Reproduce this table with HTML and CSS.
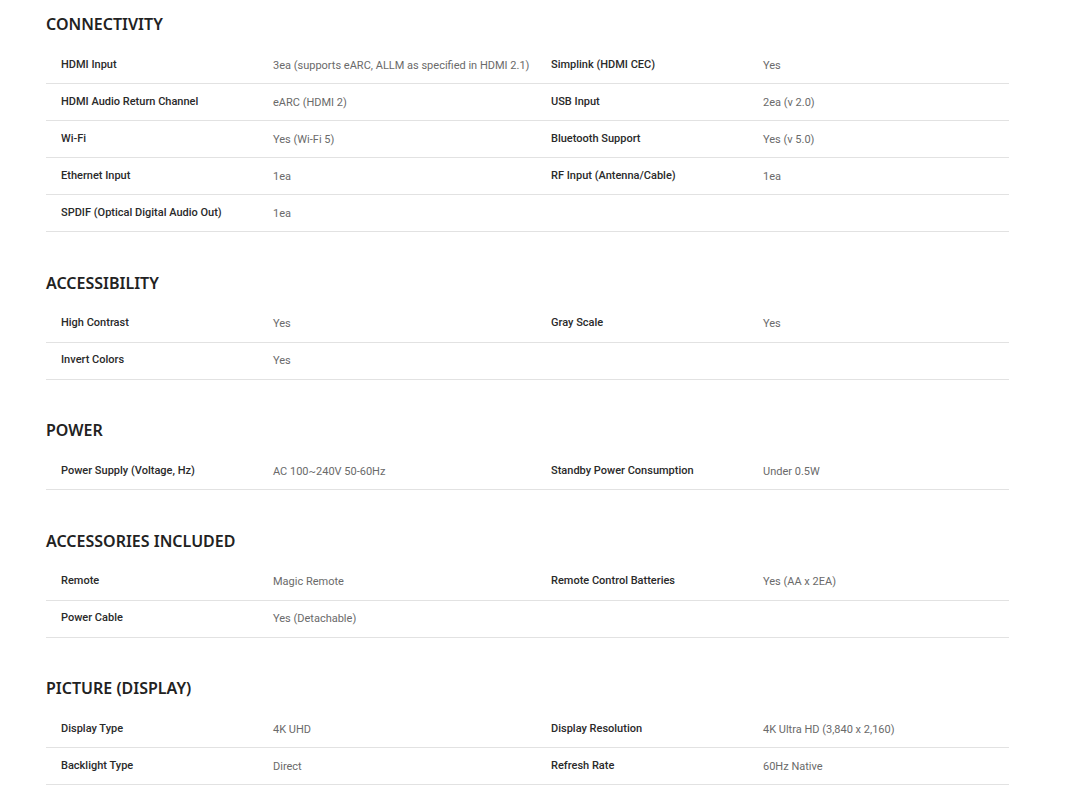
FILE: index.html
```html
<!DOCTYPE html>
<html lang="en">
<head>
<meta charset="utf-8">
<title>Specs</title>
<link rel="stylesheet" href="styles.css">
</head>
<body>
<div class="specs">
  <section class="group">
    <h2 class="title">CONNECTIVITY</h2>
    <div class="row"><span class="lbl">HDMI Input</span><span class="val">3ea (supports eARC, ALLM as specified in HDMI 2.1)</span><span class="lbl">Simplink (HDMI CEC)</span><span class="val">Yes</span></div>
    <div class="row"><span class="lbl">HDMI Audio Return Channel</span><span class="val">eARC (HDMI 2)</span><span class="lbl">USB Input</span><span class="val">2ea (v 2.0)</span></div>
    <div class="row"><span class="lbl">Wi-Fi</span><span class="val">Yes (Wi-Fi 5)</span><span class="lbl">Bluetooth Support</span><span class="val">Yes (v 5.0)</span></div>
    <div class="row"><span class="lbl">Ethernet Input</span><span class="val">1ea</span><span class="lbl">RF Input (Antenna/Cable)</span><span class="val">1ea</span></div>
    <div class="row"><span class="lbl">SPDIF (Optical Digital Audio Out)</span><span class="val">1ea</span></div>
  </section>
  <section class="group">
    <h2 class="title">ACCESSIBILITY</h2>
    <div class="row"><span class="lbl">High Contrast</span><span class="val">Yes</span><span class="lbl">Gray Scale</span><span class="val">Yes</span></div>
    <div class="row"><span class="lbl">Invert Colors</span><span class="val">Yes</span></div>
  </section>
  <section class="group">
    <h2 class="title">POWER</h2>
    <div class="row"><span class="lbl">Power Supply (Voltage, Hz)</span><span class="val">AC 100~240V 50-60Hz</span><span class="lbl">Standby Power Consumption</span><span class="val">Under 0.5W</span></div>
  </section>
  <section class="group">
    <h2 class="title">ACCESSORIES INCLUDED</h2>
    <div class="row"><span class="lbl">Remote</span><span class="val">Magic Remote</span><span class="lbl">Remote Control Batteries</span><span class="val">Yes (AA x 2EA)</span></div>
    <div class="row"><span class="lbl">Power Cable</span><span class="val">Yes (Detachable)</span></div>
  </section>
  <section class="group">
    <h2 class="title">PICTURE (DISPLAY)</h2>
    <div class="row"><span class="lbl">Display Type</span><span class="val">4K UHD</span><span class="lbl">Display Resolution</span><span class="val">4K Ultra HD (3,840 x 2,160)</span></div>
    <div class="row"><span class="lbl">Backlight Type</span><span class="val">Direct</span><span class="lbl">Refresh Rate</span><span class="val">60Hz Native</span></div>
  </section>
</div>
</body>
</html>
```

FILE: styles.css
```css
html, body {
  margin: 0;
  padding: 0;
  background: #ffffff;
}
body {
  font-family: "Noto Sans", "Open Sans", sans-serif;
  color: #333;
}
.specs {
  width: 963px;
  margin-left: 46px;
  padding-top: 3px;
  display: flex;
  flex-direction: column;
  gap: 29.5px;
}
.title {
  margin: 0;
  height: 44px;
  line-height: 42px;
  font-size: 16px;
  font-weight: 600;
  color: #222;
  letter-spacing: 0;
}
.row {
  display: grid;
  grid-template-columns: 212px 278px 212px 1fr;
  align-items: center;
  height: 36px;
  padding-left: 15px;
  border-bottom: 1px solid #e2e2e2;
  font-family: Roboto, "Noto Sans", sans-serif;
  font-size: 11px;
}
.lbl {
  font-weight: 500;
  color: #2a2a2a;
  position: relative;
  top: -1px;
}
.val {
  font-weight: 400;
  color: #6a6a6a;
}
```
